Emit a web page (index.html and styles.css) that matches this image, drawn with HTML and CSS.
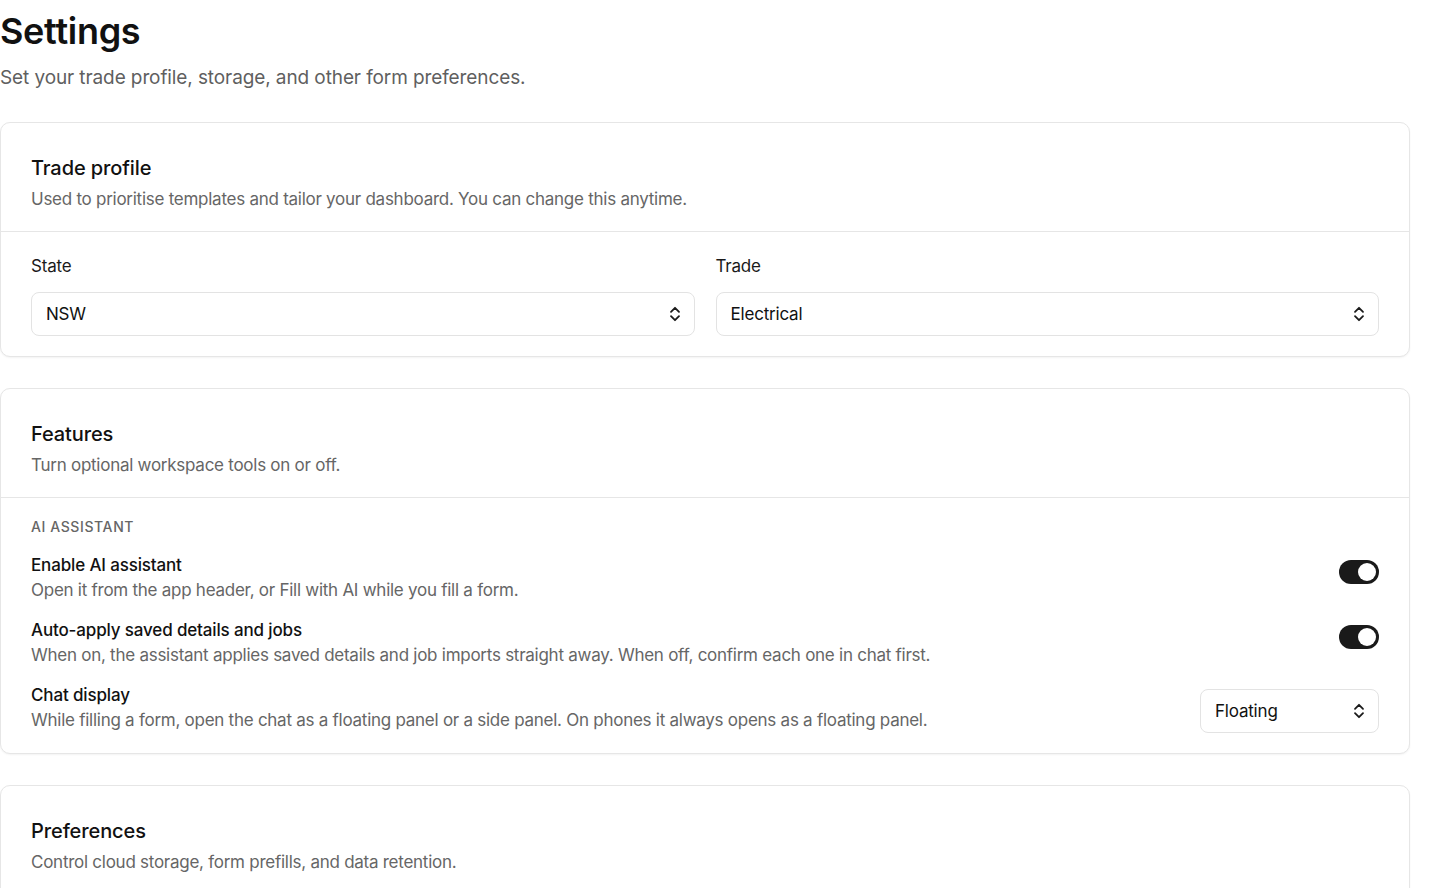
FILE: index.html
```html
<!DOCTYPE html>
<html lang="en">
<head>
<meta charset="utf-8">
<title>Settings</title>
<link rel="stylesheet" href="styles.css">
</head>
<body>
<main class="page">
  <header class="page-head">
    <h1 class="page-title">Settings</h1>
    <p class="page-sub">Set your trade profile, storage, and other form preferences.</p>
  </header>

  <section class="card">
    <div class="card-head">
      <h2 class="card-title">Trade profile</h2>
      <p class="card-desc">Used to prioritise templates and tailor your dashboard. You can change this anytime.</p>
    </div>
    <div class="card-body grid-2">
      <div class="field">
        <label class="field-label">State</label>
        <div class="select">
          <span>NSW</span>
          <svg class="chev" viewBox="0 0 18 18" width="18" height="18"><path d="M5 6.8 9 2.8l4 4M5 11.2l4 4 4-4" fill="none" stroke="currentColor" stroke-width="1.8" stroke-linecap="round" stroke-linejoin="round"/></svg>
        </div>
      </div>
      <div class="field">
        <label class="field-label">Trade</label>
        <div class="select">
          <span>Electrical</span>
          <svg class="chev" viewBox="0 0 18 18" width="18" height="18"><path d="M5 6.8 9 2.8l4 4M5 11.2l4 4 4-4" fill="none" stroke="currentColor" stroke-width="1.8" stroke-linecap="round" stroke-linejoin="round"/></svg>
        </div>
      </div>
    </div>
  </section>

  <section class="card">
    <div class="card-head">
      <h2 class="card-title">Features</h2>
      <p class="card-desc">Turn optional workspace tools on or off.</p>
    </div>
    <div class="card-body features">
      <div class="group-label">AI ASSISTANT</div>
      <div class="row">
        <div class="row-text">
          <div class="row-title">Enable AI assistant</div>
          <div class="row-desc">Open it from the app header, or Fill with AI while you fill a form.</div>
        </div>
        <span class="toggle on"><span class="knob"></span></span>
      </div>
      <div class="row">
        <div class="row-text">
          <div class="row-title">Auto-apply saved details and jobs</div>
          <div class="row-desc">When on, the assistant applies saved details and job imports straight away. When off, confirm each one in chat first.</div>
        </div>
        <span class="toggle on"><span class="knob"></span></span>
      </div>
      <div class="row">
        <div class="row-text">
          <div class="row-title">Chat display</div>
          <div class="row-desc">While filling a form, open the chat as a floating panel or a side panel. On phones it always opens as a floating panel.</div>
        </div>
        <div class="select select-sm">
          <span>Floating</span>
          <svg class="chev" viewBox="0 0 18 18" width="18" height="18"><path d="M5 6.8 9 2.8l4 4M5 11.2l4 4 4-4" fill="none" stroke="currentColor" stroke-width="1.8" stroke-linecap="round" stroke-linejoin="round"/></svg>
        </div>
      </div>
    </div>
  </section>

  <section class="card">
    <div class="card-head">
      <h2 class="card-title">Preferences</h2>
      <p class="card-desc">Control cloud storage, form prefills, and data retention.</p>
    </div>
    <div class="card-body">
      <div class="spacer"></div>
    </div>
  </section>
</main>
</body>
</html>
```

FILE: styles.css
```css
* { box-sizing: border-box; }
html, body { margin: 0; padding: 0; background: #fff; }
body {
  font-family: Inter, "Noto Sans", "Liberation Sans", sans-serif;
  color: #111;
  -webkit-font-smoothing: antialiased;
}
.page {
  padding: 0 30px 0 0;
  display: flex;
  flex-direction: column;
  gap: 31px;
}
.page-head { padding-top: 8px; }
.page-title {
  margin: 0;
  font-size: 36px;
  line-height: 46px;
  font-weight: 600;
  letter-spacing: -0.3px;
}
.page-sub {
  margin: 11px 0 0;
  font-size: 19px;
  line-height: 26px;
  color: #5f5f5f;
  letter-spacing: -0.1px;
}
.card {
  border: 1px solid #e6e6e6;
  border-radius: 10px;
  background: #fff;
  box-shadow: 0 1px 2px rgba(0,0,0,0.05);
}
.card-head {
  padding: 31px 30px 20px;
  border-bottom: 1px solid #e6e6e6;
}
.card-title {
  margin: 0;
  font-size: 20px;
  line-height: 28px;
  font-weight: 500;
  color: #111;
  letter-spacing: -0.1px;
}
.card-desc {
  margin: 5px 0 0;
  font-size: 17px;
  line-height: 24px;
  color: #666;
  letter-spacing: -0.26px;
}
.card-body { padding: 22px 30px 20px; }
.grid-2 {
  display: grid;
  grid-template-columns: 1fr 1fr;
  gap: 21px;
}
.field { display: flex; flex-direction: column; gap: 14px; }
.field-label { font-size: 17px; line-height: 24px; color: #1a1a1a; letter-spacing: -0.2px; }
.select {
  height: 44px;
  border: 1px solid #e3e3e3;
  border-radius: 8px;
  display: flex;
  align-items: center;
  justify-content: space-between;
  padding: 0 10px 0 14px;
  font-size: 17px;
  color: #111;
  background: #fff;
  letter-spacing: -0.2px;
}
.chev { color: #1a1a1a; flex: none; }
.features { padding: 19px 30px 21px; display: flex; flex-direction: column; gap: 16px; }
.group-label {
  font-size: 14px;
  line-height: 20px;
  letter-spacing: 0.6px;
  color: #666;
  font-weight: 500;
}
.row {
  display: flex;
  align-items: center;
  justify-content: space-between;
  gap: 24px;
}
.row-title { font-size: 17px; line-height: 24px; font-weight: 500; color: #111; letter-spacing: -0.15px; }
.row-desc { font-size: 17px; line-height: 24px; color: #666; margin-top: 1px; letter-spacing: -0.26px; }
.toggle {
  flex: none;
  width: 40px;
  height: 24px;
  border-radius: 12px;
  background: #1a1a1a;
  display: flex;
  align-items: center;
  justify-content: flex-end;
  padding: 0 3px;
  margin-bottom: 11px;
}
.knob {
  width: 18px;
  height: 18px;
  border-radius: 50%;
  background: #fff;
}
.select-sm { width: 179px; flex: none; align-self: flex-end; margin-bottom: -1px; }
.spacer { height: 40px; }
```
